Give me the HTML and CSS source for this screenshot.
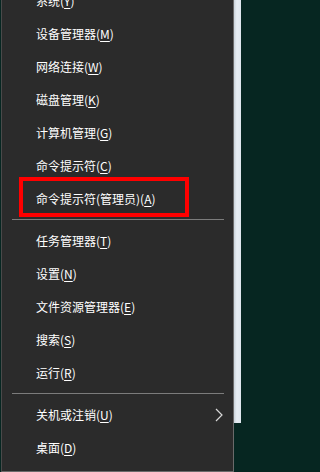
FILE: index.html
```html
<!DOCTYPE html>
<html lang="zh-CN">
<head>
<meta charset="utf-8">
<title>菜单</title>
<link rel="stylesheet" href="styles.css">
</head>
<body>
<div class="page">
  <div class="menu">
    <ul class="list">
      <li class="item">系统(<u>Y</u>)</li>
      <li class="item">设备管理器(<u>M</u>)</li>
      <li class="item">网络连接(<u>W</u>)</li>
      <li class="item">磁盘管理(<u>K</u>)</li>
      <li class="item">计算机管理(<u>G</u>)</li>
      <li class="item">命令提示符(<u>C</u>)</li>
      <li class="item highlighted">命令提示符(管理员)(<u>A</u>)<span class="mark"></span></li>
      <li class="sep"></li>
      <li class="item">任务管理器(<u>T</u>)</li>
      <li class="item">设置(<u>N</u>)</li>
      <li class="item">文件资源管理器(<u>E</u>)</li>
      <li class="item">搜索(<u>S</u>)</li>
      <li class="item">运行(<u>R</u>)</li>
      <li class="sep"></li>
      <li class="item sub"><span>关机或注销(<u>U</u>)</span>
        <svg class="chev" width="8" height="14" viewBox="0 0 8 14"><polyline points="1,1 7,7 1,13" fill="none" stroke="#d8d8d8" stroke-width="1.2"/></svg>
      </li>
      <li class="item">桌面(<u>D</u>)</li>
    </ul>
  </div>
  <div class="side">
    <div class="side-top"></div>
    <div class="side-bottom"></div>
  </div>
</div>
</body>
</html>
```
FILE: styles.css
```css
html, body {
  margin: 0;
  padding: 0;
  background: #062621;
  height: 472px;
  overflow: hidden;
}
.page {
  display: flex;
  width: 240px;
  height: 472px;
  padding-left: 1px;
}
.menu {
  width: 231px;
  height: 471px;
  background: #2b2b2b;
  border-left: 1px solid #4a4a4a;
  border-right: 1px solid #6a6a6a;
  border-bottom: 1px solid #6a6a6a;
  box-sizing: content-box;
  overflow: hidden;
}
.list {
  list-style: none;
  margin: -16px 0 0 0;
  padding: 0;
  font-family: "Noto Sans CJK SC", "Noto Sans", sans-serif;
  font-size: 12px;
  color: #ffffff;
}
.item {
  position: relative;
  height: 33px;
  line-height: 33px;
  padding-left: 34px;
  white-space: nowrap;
}
.item u {
  text-decoration: underline;
  text-underline-offset: 2px;
  text-decoration-thickness: 1px;
}
.sep {
  height: 9px;
  display: flex;
  align-items: center;
  padding: 0 9px 0 10px;
}
.sep::before {
  content: "";
  flex: 1;
  height: 1px;
  background: #7c7c7c;
}
.sub {
  display: flex;
  justify-content: space-between;
  align-items: center;
  padding-right: 10px;
}
.chev {
  display: block;
}
.mark {
  position: absolute;
  left: 17px;
  top: -5px;
  width: 162px;
  height: 32px;
  border: 4px solid #ff0000;
}
.side {
  flex: 1;
  display: flex;
  flex-direction: column;
}
.side-top {
  height: 423px;
  background: linear-gradient(to right, #c9d2da, #e6edf3 40%, #dfe7ee);
}
.side-bottom {
  flex: 1;
  background: #062621;
}
```
